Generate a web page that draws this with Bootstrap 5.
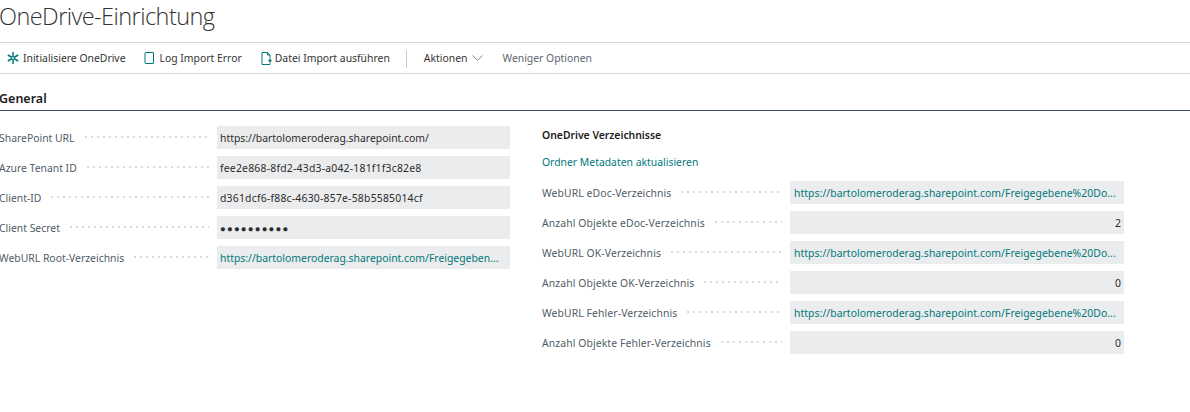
<!DOCTYPE html>
<html lang="de">
<head>
<meta charset="utf-8">
<title>OneDrive-Einrichtung</title>
<link href="https://cdn.jsdelivr.net/npm/bootstrap@5.3.0/dist/css/bootstrap.min.css" rel="stylesheet">
<style>
html,body{background:#fff;overflow:hidden}
body{font-family:"Noto Sans","Open Sans","Liberation Sans",sans-serif;font-size:10.4px;color:#333;}
.page-title{font-family:"Open Sans","Noto Sans",sans-serif;font-weight:300;font-size:23.5px;line-height:32px;margin:0 0 0 -1px;height:42px;color:#333;letter-spacing:-.55px}
.tool-bar{height:32px;border-top:1px solid #d4d4d4;border-bottom:1px solid #d4d4d4;padding:1px 0 0 7px;color:#333}
.tool-item{color:#333;text-decoration:none;white-space:nowrap}
.tool-item svg{display:block;flex:none}
.tool-sep{width:1px;height:18px;background:#c8c8c8}
.tool-muted{color:#5c6670}
.sect-head{font-weight:600;font-size:12.5px;line-height:18px;color:#212121;margin:16px 0 0 -1px;padding-bottom:2px;}
.sect-rule{height:1px;background:#3f4a68;margin-bottom:15px}
.form-cols{gap:32px}
.col-left{width:510px;flex:none}
.col-right{width:582px;flex:none;margin-top:1px}
.field-line{height:23px;margin-bottom:7px}
.field-label{color:#505c66;white-space:nowrap;padding-right:8px;margin-left:-1px;padding-top:2px}
.label-right .field-label{letter-spacing:.1px}
.leader{flex:1 1 auto;height:2px;margin-right:8px;background-image:radial-gradient(circle,#d8d8d8 .7px,transparent .9px);background-size:6px 2px;background-repeat:repeat-x}
.field-box{background:#ebeced;height:23px;line-height:24px;padding:0 3px;color:#2b2b2b;overflow:hidden;white-space:nowrap;flex:none}
.box-left{width:293px}
.box-right{width:334px}
.box-right.link-teal{padding-left:4px;letter-spacing:.05px}
.label-left{width:217px}
.label-right{width:248px}
.link-teal{color:#00787a;text-decoration:none}
.id-value{letter-spacing:.22px}
.group-head{font-weight:600;font-size:10.4px;line-height:16px;color:#212121;margin-bottom:11px}
.action-link{line-height:16px;margin-bottom:11px;display:block}
.secret{letter-spacing:1.2px;font-size:9.5px;line-height:25px}
</style>
</head>
<body>
<h1 class="page-title">OneDrive-Einrichtung</h1>
<div class="tool-bar d-flex align-items-center">
  <a class="tool-item d-flex align-items-center" href="#" style="gap:4px;margin-right:18px">
    <svg width="12" height="12" viewBox="0 0 12 12" fill="none" stroke="#00787a" stroke-width="1.5"><path d="M6 0v12M.8 3l10.400 6M11.200 3L.8 9"/><circle cx="6" cy="6" r="1.500" fill="#fff" stroke-width="1"/></svg>
    Initialisiere OneDrive</a>
  <a class="tool-item d-flex align-items-center" href="#" style="gap:6px;margin-right:19px">
    <svg width="10" height="12" viewBox="0 0 10 12" fill="none"><rect x="1" y=".5" width="8.500" height="11" rx=".5" stroke="#00787a"/></svg>
    Log Import Error</a>
  <a class="tool-item d-flex align-items-center" href="#" style="gap:3px;margin-right:16px">
    <svg width="11" height="13" viewBox="0 0 11 13" fill="none"><path d="M9 6.500V3L6.500.5H1v12h8v-2" stroke="#00787a"/><path d="M6.500.5V3H9" stroke="#00787a"/><circle cx="9" cy="8.500" r="1.500" fill="#00787a"/></svg>
    Datei Import ausführen</a>
  <span class="tool-sep" style="margin-right:17px"></span>
  <a class="tool-item d-flex align-items-center" href="#" style="gap:5px;margin-right:19px">Aktionen
    <svg width="11" height="6" viewBox="0 0 11 6" fill="none" stroke="#5c6670" stroke-width=".8"><path d="M.5.5L5.500 5.300 10.500.5"/></svg></a>
  <a class="tool-item tool-muted" href="#">Weniger Optionen</a>
</div>
<div class="sect-head">General</div>
<div class="sect-rule"></div>
<div class="d-flex form-cols">
  <div class="col-left">
    <div class="field-line d-flex align-items-center"><div class="label-left d-flex align-items-center"><span class="field-label">SharePoint URL</span><span class="leader"></span></div><div class="field-box box-left">https://bartolomeroderag.sharepoint.com/</div></div>
    <div class="field-line d-flex align-items-center"><div class="label-left d-flex align-items-center"><span class="field-label">Azure Tenant ID</span><span class="leader"></span></div><div class="field-box box-left id-value">fee2e868-8fd2-43d3-a042-181f1f3c82e8</div></div>
    <div class="field-line d-flex align-items-center"><div class="label-left d-flex align-items-center"><span class="field-label">Client-ID</span><span class="leader"></span></div><div class="field-box box-left id-value">d361dcf6-f88c-4630-857e-58b5585014cf</div></div>
    <div class="field-line d-flex align-items-center"><div class="label-left d-flex align-items-center"><span class="field-label">Client Secret</span><span class="leader"></span></div><div class="field-box box-left secret">●●●●●●●●●●</div></div>
    <div class="field-line d-flex align-items-center"><div class="label-left d-flex align-items-center"><span class="field-label">WebURL Root-Verzeichnis</span><span class="leader"></span></div><div class="field-box box-left link-teal">https://bartolomeroderag.sharepoint.com/Freigegeben...</div></div>
  </div>
  <div class="col-right">
    <div class="group-head">OneDrive Verzeichnisse</div>
    <a class="action-link link-teal" href="#">Ordner Metadaten aktualisieren</a>
    <div class="field-line d-flex align-items-center"><div class="label-right d-flex align-items-center"><span class="field-label ms-0">WebURL eDoc-Verzeichnis</span><span class="leader"></span></div><div class="field-box box-right link-teal">https://bartolomeroderag.sharepoint.com/Freigegebene%20Do...</div></div>
    <div class="field-line d-flex align-items-center"><div class="label-right d-flex align-items-center"><span class="field-label ms-0">Anzahl Objekte eDoc-Verzeichnis</span><span class="leader"></span></div><div class="field-box box-right text-end">2</div></div>
    <div class="field-line d-flex align-items-center"><div class="label-right d-flex align-items-center"><span class="field-label ms-0">WebURL OK-Verzeichnis</span><span class="leader"></span></div><div class="field-box box-right link-teal">https://bartolomeroderag.sharepoint.com/Freigegebene%20Do...</div></div>
    <div class="field-line d-flex align-items-center"><div class="label-right d-flex align-items-center"><span class="field-label ms-0">Anzahl Objekte OK-Verzeichnis</span><span class="leader"></span></div><div class="field-box box-right text-end">0</div></div>
    <div class="field-line d-flex align-items-center"><div class="label-right d-flex align-items-center"><span class="field-label ms-0">WebURL Fehler-Verzeichnis</span><span class="leader"></span></div><div class="field-box box-right link-teal">https://bartolomeroderag.sharepoint.com/Freigegebene%20Do...</div></div>
    <div class="field-line d-flex align-items-center"><div class="label-right d-flex align-items-center"><span class="field-label ms-0">Anzahl Objekte Fehler-Verzeichnis</span><span class="leader"></span></div><div class="field-box box-right text-end">0</div></div>
  </div>
</div>
<script src="https://cdn.jsdelivr.net/npm/bootstrap@5.3.0/dist/js/bootstrap.bundle.min.js"></script>
</body>
</html>
